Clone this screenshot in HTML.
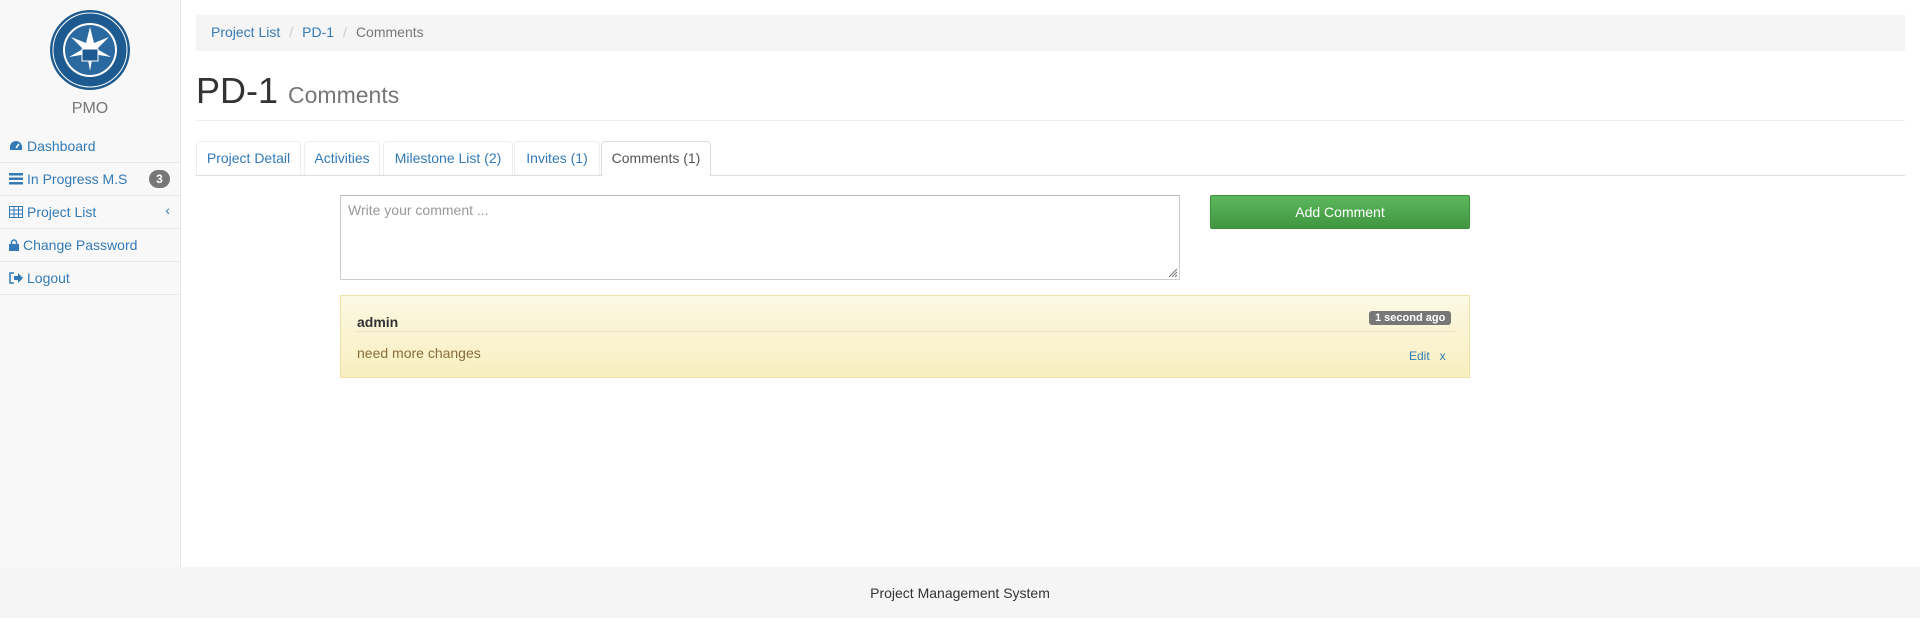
<!DOCTYPE html>
<html><head><meta charset="utf-8"><style>
*{box-sizing:border-box;margin:0;padding:0}
body{width:1920px;height:618px;font-family:"Liberation Sans",Arial,sans-serif;font-size:14px;color:#333;background:#fff;position:relative;overflow:hidden}
a{color:#337ab7;text-decoration:none}
.side{position:absolute;left:0;top:0;width:181px;height:567px;background:#f8f8f8;border-right:1px solid #e7e7e7}
.pmo{position:absolute;top:100px;width:180px;text-align:center;font-size:16px;color:#777}
.menu{position:absolute;top:130px;left:0;width:180px}
.menu div{height:33px;border-bottom:1px solid #e7e7e7;padding:8px 0 0 9px;color:#337ab7;font-size:14px;position:relative}
.menu svg{vertical-align:-1px;margin-right:4px}
.badge3{position:absolute;right:10px;top:7px;background:#777;color:#fff;border-radius:10px;font-size:12px;font-weight:bold;width:21px;height:18px;text-align:center;line-height:18px}
.foot{position:absolute;top:567px;left:0;width:1920px;height:51px;background:#f5f5f5;text-align:center;line-height:52px;font-size:14px;color:#333}
.bc{position:absolute;left:196px;top:15px;width:1709px;height:36px;background:#f5f5f5;padding:9px 15px;font-size:14px}
.bc .s{color:#ccc;padding:0 9px}
h1{position:absolute;left:196px;top:70px;font-size:36px;font-weight:normal;color:#333}
h1 small{font-size:23px;color:#777}
.hr{position:absolute;left:196px;top:120px;width:1709px;border-top:1px solid #eee}
.tabs{position:absolute;left:196px;top:141px;width:1709px;height:35px;border-bottom:1px solid #ddd}
.tab{position:absolute;top:0;height:34px;border:1px solid #eee;border-bottom:none;border-radius:4px 4px 0 0;text-align:center;line-height:33px;color:#337ab7;font-size:14px}
.tab.act{border-color:#ddd;background:#fff;color:#555;height:35px}
.ta{position:absolute;left:340px;top:195px;width:840px;height:85px;border:1px solid #ccc;border-top-color:#bbb;padding:6px 7px;color:#999;font-size:14px}
.btn{position:absolute;left:1210px;top:195px;width:260px;height:34px;background:linear-gradient(#5cb85c,#419641);border:1px solid #3e8f3e;color:#fff;text-align:center;line-height:32px;font-size:14px;border-radius:2px}
.panel{position:absolute;left:340px;top:295px;width:1130px;height:83px;border:1px solid #f0e3a5;background:linear-gradient(#fcf8e3,#f8efc0);}
</style></head><body>
<div class="side">
<svg style="position:absolute;left:49px;top:9px" width="82" height="82" viewBox="0 0 82 82">
<circle cx="41" cy="41" r="40" fill="#1c5a8f"/><circle cx="41" cy="41" r="37" fill="none" stroke="#fff" stroke-width="1"/>
<circle cx="41" cy="41" r="27" fill="#fff"/><circle cx="41" cy="41" r="25" fill="#2a6aa0"/>
<path d="M41 18 L45 34 L60 28 L48 40 L62 48 L44 45 L41 62 L38 45 L20 48 L34 40 L22 28 L37 34Z" fill="#fff"/>
<rect x="33" y="40" width="16" height="12" fill="#1c5a8f" stroke="#fff"/>
</svg>
<div class="pmo">PMO</div>
<div class="menu">
<div><svg width="14" height="12" viewBox="0 0 14 12"><path d="M7 1a6 6 0 0 0-6 6v3h12V7a6 6 0 0 0-6-6z" fill="#337ab7"/><path d="M7 8L10 4" stroke="#fff" stroke-width="1.5"/></svg>Dashboard</div>
<div><svg width="14" height="12" viewBox="0 0 14 12"><rect y="0" width="14" height="2.5" fill="#337ab7"/><rect y="4.5" width="14" height="2.5" fill="#337ab7"/><rect y="9" width="14" height="2.5" fill="#337ab7"/></svg>In Progress M.S<span class="badge3">3</span></div>
<div><svg width="14" height="12" viewBox="0 0 14 12"><rect x=".5" y=".5" width="13" height="11" fill="none" stroke="#337ab7"/><path d="M0 4h14M0 8h14M5 0v12M9.5 0v12" stroke="#337ab7"/></svg>Project List<span style="position:absolute;right:10px;top:6px">&#8249;</span></div>
<div><svg width="10" height="12" viewBox="0 0 10 12"><path d="M2.5 5V3.5a2.5 2.5 0 0 1 5 0V5" fill="none" stroke="#337ab7" stroke-width="1.5"/><rect y="5" width="10" height="7" fill="#337ab7"/></svg>Change Password</div>
<div><svg width="14" height="12" viewBox="0 0 14 12"><path d="M5 1H1v10h4" fill="none" stroke="#337ab7" stroke-width="1.5"/><path d="M5 4h4V1l5 5-5 5V8H5z" fill="#337ab7"/></svg>Logout</div>
</div>
</div>
<div class="bc"><a>Project List</a><span class="s">/</span><a>PD-1</a><span class="s">/</span><span style="color:#777">Comments</span></div>
<h1>PD-1 <small>Comments</small></h1>
<div class="hr"></div>
<div class="tabs">
<div class="tab" style="left:0;width:105px">Project Detail</div>
<div class="tab" style="left:108px;width:76px">Activities</div>
<div class="tab" style="left:187px;width:130px">Milestone List (2)</div>
<div class="tab" style="left:318px;width:86px">Invites (1)</div>
<div class="tab act" style="left:405px;width:110px">Comments (1)</div>
</div>
<div class="ta">Write your comment ...
<svg style="position:absolute;right:1px;bottom:1px" width="12" height="12" viewBox="0 0 12 12"><path d="M11 3L3 11M11 6L6 11M11 9L9 11" stroke="#777" stroke-width="1"/></svg></div>
<div class="btn">Add Comment</div>
<div class="panel">
<div style="position:absolute;left:16px;top:18px;font-weight:bold;font-size:14px;color:#333">admin</div>
<div style="position:absolute;left:1028px;top:15px;background:#777;color:#fff;font-size:11px;font-weight:bold;padding:1px 6px;border-radius:3px">1 second ago</div>
<div style="position:absolute;left:16px;top:35px;width:1098px;border-top:1px solid #e6e0c8"></div>
<div style="position:absolute;left:16px;top:49px;color:#8a6d3b;font-size:14px">need more changes</div>
<div style="position:absolute;left:1068px;top:53px;color:#337ab7;font-size:12px">Edit &nbsp; x</div>
</div>
<div class="foot">Project Management System</div>
</body></html>
